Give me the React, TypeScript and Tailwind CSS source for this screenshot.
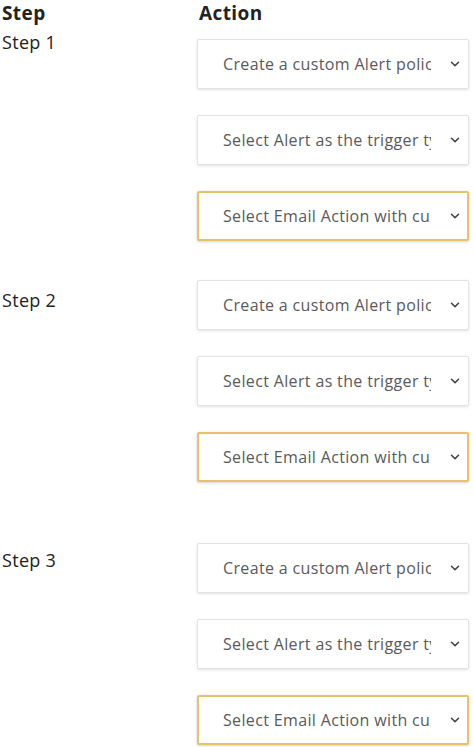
import { ChevronDown } from "lucide-react";

const options = [
  { label: "Create a custom Alert policy", active: false },
  { label: "Select Alert as the trigger type", active: false },
  { label: "Select Email Action with custom message", active: true },
];

const steps = [
  { name: "Step 1", gap: "mt-[4px]", labelPad: "pt-0", boxPad: "pt-[9px]" },
  { name: "Step 2", gap: "mt-[39px]", labelPad: "pt-[8px]", boxPad: "pt-0" },
  { name: "Step 3", gap: "mt-[61px]", labelPad: "pt-[5px]", boxPad: "pt-0" },
];

function Dropdown({ label, active }: { label: string; active: boolean }) {
  return (
    <div
      className={
        active
          ? "flex h-[50px] w-[272px] items-center rounded-[2px] border-2 border-[#e6c36a] bg-white pl-[24px] pr-[5px] shadow-[0_1px_3px_rgba(0,0,0,0.18)]"
          : "flex h-[50px] w-[272px] items-center rounded-[2px] border border-[#e3e3e3] bg-white pl-[25px] pr-[6px] shadow-[0_1px_3px_rgba(0,0,0,0.12)]"
      }
    >
      <span className="flex-1 overflow-hidden whitespace-nowrap text-[16px] tracking-[0.35px] text-[#5a5a5a]">
        {label}
      </span>
      <ChevronDown className="ml-[17px] h-[14px] w-[14px] shrink-0 text-[#444]" strokeWidth={2.75} />
    </div>
  );
}

export default function App() {
  return (
    <div className="min-h-[747px] bg-white font-['Open_Sans',sans-serif] text-[#222]">
      {/* kolon başlıkları */}
      <div className="flex text-[19px] font-bold leading-[26px] tracking-[0.4px]">
        <div className="w-[199px] pl-[2px]">Step</div>
        <div>Action</div>
      </div>

      {steps.map((step) => (
        <div key={step.name} className={`flex ${step.gap}`}>
          <div className={`w-[197px] pl-[2px] text-[18px] leading-6 tracking-[0.3px] ${step.labelPad}`}>
            {step.name}
          </div>
          <div className={`flex flex-col gap-[26px] ${step.boxPad}`}>
            {options.map((o) => (
              <Dropdown key={o.label} label={o.label} active={o.active} />
            ))}
          </div>
        </div>
      ))}
    </div>
  );
}
